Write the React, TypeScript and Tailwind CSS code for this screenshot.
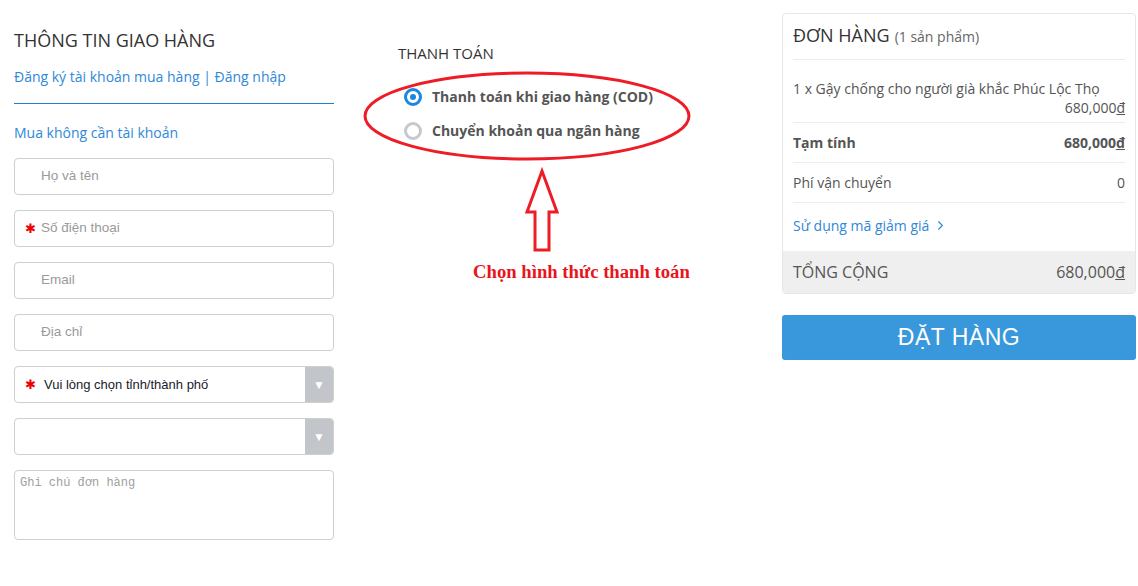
import { ChevronRight } from 'lucide-react';

const SANS = { fontFamily: "'Open Sans', 'Noto Sans', sans-serif" };
const ARIAL = { fontFamily: "'Liberation Sans', Arial, sans-serif" };

function Field({ placeholder, required }: { placeholder: string; required?: boolean }) {
  return (
    <div className="flex h-[37px] items-center rounded-[4px] border border-[#cfcfcf] bg-white" style={ARIAL}>
      <span className="w-[26px] pl-[10px] text-[13px] text-[#e00] leading-none">{required ? '✱' : ''}</span>
      <span className="text-[13.5px] text-[#9a9a9a]">{placeholder}</span>
    </div>
  );
}

function SelectBox({ label }: { label?: string }) {
  return (
    <div className="flex h-[37px] items-stretch overflow-hidden rounded-[4px] border border-[#cfcfcf] bg-white" style={ARIAL}>
      <div className="flex flex-1 items-center">
        {label && (
          <>
            <span className="w-[29px] pl-[10px] text-[13px] text-[#e00] leading-none">✱</span>
            <span className="text-[13px] text-[#1a1a2a]">{label}</span>
          </>
        )}
      </div>
      <div className="flex w-[28px] items-center justify-center bg-[#c2c5c9]">
        <span className="text-[12px] text-white">▼</span>
      </div>
    </div>
  );
}

function Radio({ checked, label }: { checked?: boolean; label: string }) {
  return (
    <div className="flex items-center gap-[10px]">
      <span
        className={
          checked
            ? 'flex h-[18px] w-[18px] items-center justify-center rounded-full border-[3px] border-[#1b87e0]'
            : 'h-[18px] w-[18px] rounded-full border-[3px] border-[#c6c9cc]'
        }
      >
        {checked && <span className="h-[6px] w-[6px] rounded-full bg-[#1b87e0]" />}
      </span>
      <span className="text-[14px] font-bold text-[#555]">{label}</span>
    </div>
  );
}

export default function App() {
  return (
    <div className="relative min-h-[586px] w-[1138px] bg-white text-[#333]" style={SANS}>
      <div className="flex pt-[13px]">
        {/* Shipping info */}
        <div className="ml-[14px] w-[320px] pt-[15px]">
          <h2 className="text-[18px] leading-[24px] text-[#333]">THÔNG TIN GIAO HÀNG</h2>
          <div className="mt-[15px] text-[14px] leading-[20px] text-[#2f88d8]">
            Đăng ký tài khoản mua hàng | Đăng nhập
          </div>
          <div className="mt-[16px] h-px bg-[#1f7fd3]" />
          <div className="mt-[19px] text-[14px] leading-[20px] text-[#2f88d8]">Mua không cần tài khoản</div>

          <div className="mt-[15px] flex flex-col gap-[15px]">
            <Field placeholder="Họ và tên" />
            <Field placeholder="Số điện thoại" required />
            <Field placeholder="Email" />
            <Field placeholder="Địa chỉ" />
            <SelectBox label="Vui lòng chọn tỉnh/thành phố" />
            <SelectBox />
            <div
              className="h-[70px] rounded-[4px] border border-[#cfcfcf] px-[5px] py-[3px] text-[12px] text-[#a0a0a0]"
              style={{ fontFamily: "'Liberation Mono', 'DejaVu Sans Mono', monospace" }}
            >
              Ghi chú đơn hàng
            </div>
          </div>
        </div>

        {/* Payment */}
        <div className="ml-[64px] w-[300px] pt-[30px]">
          <h3 className="text-[15px] leading-[20px] text-[#333]">THANH TOÁN</h3>
          <div className="ml-[6px] mt-[23px] flex flex-col gap-[13px]">
            <Radio checked label="Thanh toán khi giao hàng (COD)" />
            <Radio label="Chuyển khoản qua ngân hàng" />
          </div>
        </div>

        {/* Order summary */}
        <div className="ml-[84px] w-[354px]">
          <div className="overflow-hidden rounded-[4px] border border-[#e6e6e6]">
            <div className="px-[10px]">
              <div className="flex items-baseline gap-[5px] border-b border-[#ececec] pb-[10px] pt-[8px]">
                <span className="text-[18px] text-[#333]">ĐƠN HÀNG</span>
                <span className="text-[14px] text-[#666]">(1 sản phẩm)</span>
              </div>
              <div className="border-b border-[#ececec] pb-[5px] pt-[19px] text-[14px] leading-[19px] text-[#555]">
                <div>1 x Gậy chống cho người già khắc Phúc Lộc Thọ</div>
                <div className="text-right">680,000<span className="underline">đ</span></div>
              </div>
              <div className="flex h-[40px] items-center justify-between border-b border-[#ececec] text-[14px] font-bold text-[#555]">
                <span>Tạm tính</span>
                <span>680,000<span className="underline">đ</span></span>
              </div>
              <div className="flex h-[40px] items-center justify-between border-b border-[#ececec] text-[14px] text-[#555]">
                <span>Phí vận chuyển</span>
                <span>0</span>
              </div>
              <div className="flex h-[48px] items-center gap-[4px] pb-[3px] text-[14px] text-[#2f88d8]">
                <span>Sử dụng mã giảm giá</span>
                <ChevronRight size={15} strokeWidth={1.75} />
              </div>
            </div>
            <div className="flex h-[42px] items-center justify-between bg-[#efefef] px-[10px] text-[16px] text-[#555]">
              <span>TỔNG CỘNG</span>
              <span>680,000<span className="underline">đ</span></span>
            </div>
          </div>
          <button
            className="mt-[21px] h-[45px] w-full rounded-[3px] bg-[#3898db] text-[23px] tracking-[0.5px] text-white"
            style={ARIAL}
          >
            ĐẶT HÀNG
          </button>
        </div>
      </div>

      {/* Annotation: ellipse, arrow and caption */}
      <svg className="pointer-events-none absolute left-0 top-0" width="1138" height="586">
        <ellipse cx="527" cy="116" rx="162" ry="43" fill="none" stroke="#ee1c25" strokeWidth="3" />
        <path
          d="M542 171 L557 212 L549 212 L549 250 L535 250 L535 212 L527 212 Z"
          fill="none"
          stroke="#ee1c25"
          strokeWidth="3"
          strokeLinejoin="miter"
        />
      </svg>
      <div
        className="absolute left-[473px] top-[258px] text-[18.7px] font-bold text-[#e8151c]"
        style={{ fontFamily: "'Liberation Serif', 'Times New Roman', serif" }}
      >
        Chọn hình thức thanh toán
      </div>
    </div>
  );
}
